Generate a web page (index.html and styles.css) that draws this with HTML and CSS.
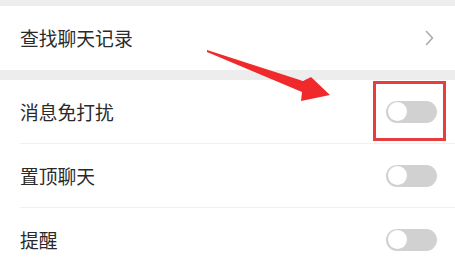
FILE: index.html
```html
<!DOCTYPE html>
<html lang="zh">
<head>
<meta charset="utf-8">
<link rel="stylesheet" href="styles.css">
</head>
<body>
<div class="page">
  <div class="card first">
    <div class="row">
      <div class="row-inner last">
        <span class="label">查找聊天记录</span>
        <svg class="chev" width="9" height="16" viewBox="0 0 9 16"><path d="M1.5 1.5 L7.5 8 L1.5 14.5" fill="none" stroke="#ababab" stroke-width="1.6" stroke-linecap="round" stroke-linejoin="round"/></svg>
      </div>
    </div>
  </div>
  <div class="card">
    <div class="row">
      <div class="row-inner">
        <span class="label">消息免打扰</span>
        <span class="toggle"><span class="knob"></span></span>
      </div>
    </div>
    <div class="row">
      <div class="row-inner">
        <span class="label">置顶聊天</span>
        <span class="toggle"><span class="knob"></span></span>
      </div>
    </div>
    <div class="row">
      <div class="row-inner last">
        <span class="label">提醒</span>
        <span class="toggle"><span class="knob"></span></span>
      </div>
    </div>
  </div>
  <svg class="annot" width="455" height="268" viewBox="0 0 455 268">
    <polygon points="207,50 303,81 311,77 330,95 301,101 302,92 207,52" fill="#f0292b"/>
    <rect x="374.5" y="82.5" width="70" height="57" fill="none" stroke="#e63d3f" stroke-width="3"/>
  </svg>
</div>
</body>
</html>
```
FILE: styles.css
```css
html, body {
  margin: 0;
  padding: 0;
  background: #ededed;
}
.page {
  position: relative;
  width: 455px;
  height: 268px;
  overflow: hidden;
  padding-top: 6px;
  box-sizing: border-box;
  font-family: "Noto Sans CJK SC", "Noto Sans", sans-serif;
}
.card {
  background: #ffffff;
}
.card.first {
  margin-bottom: 10px;
}
.row {
  padding-left: 20px;
}
.row-inner {
  display: flex;
  align-items: center;
  justify-content: space-between;
  height: 63px;
  border-bottom: 1px solid #f1f1f1;
  padding-right: 18px;
}
.row-inner.last {
  border-bottom-color: transparent;
}
.first .row-inner {
  padding-right: 21px;
}
.label {
  font-size: 18.8px;
  color: #2a2a2a;
  letter-spacing: 0;
}
.chev {
  display: block;
}
.toggle {
  display: flex;
  align-items: center;
  width: 51px;
  height: 22px;
  border-radius: 11px;
  background: #d1d1d1;
  padding: 0 1.5px;
  box-sizing: border-box;
}
.knob {
  width: 19px;
  height: 19px;
  border-radius: 50%;
  background: #ffffff;
}
.annot {
  position: absolute;
  left: 0;
  top: 0;
}
```
